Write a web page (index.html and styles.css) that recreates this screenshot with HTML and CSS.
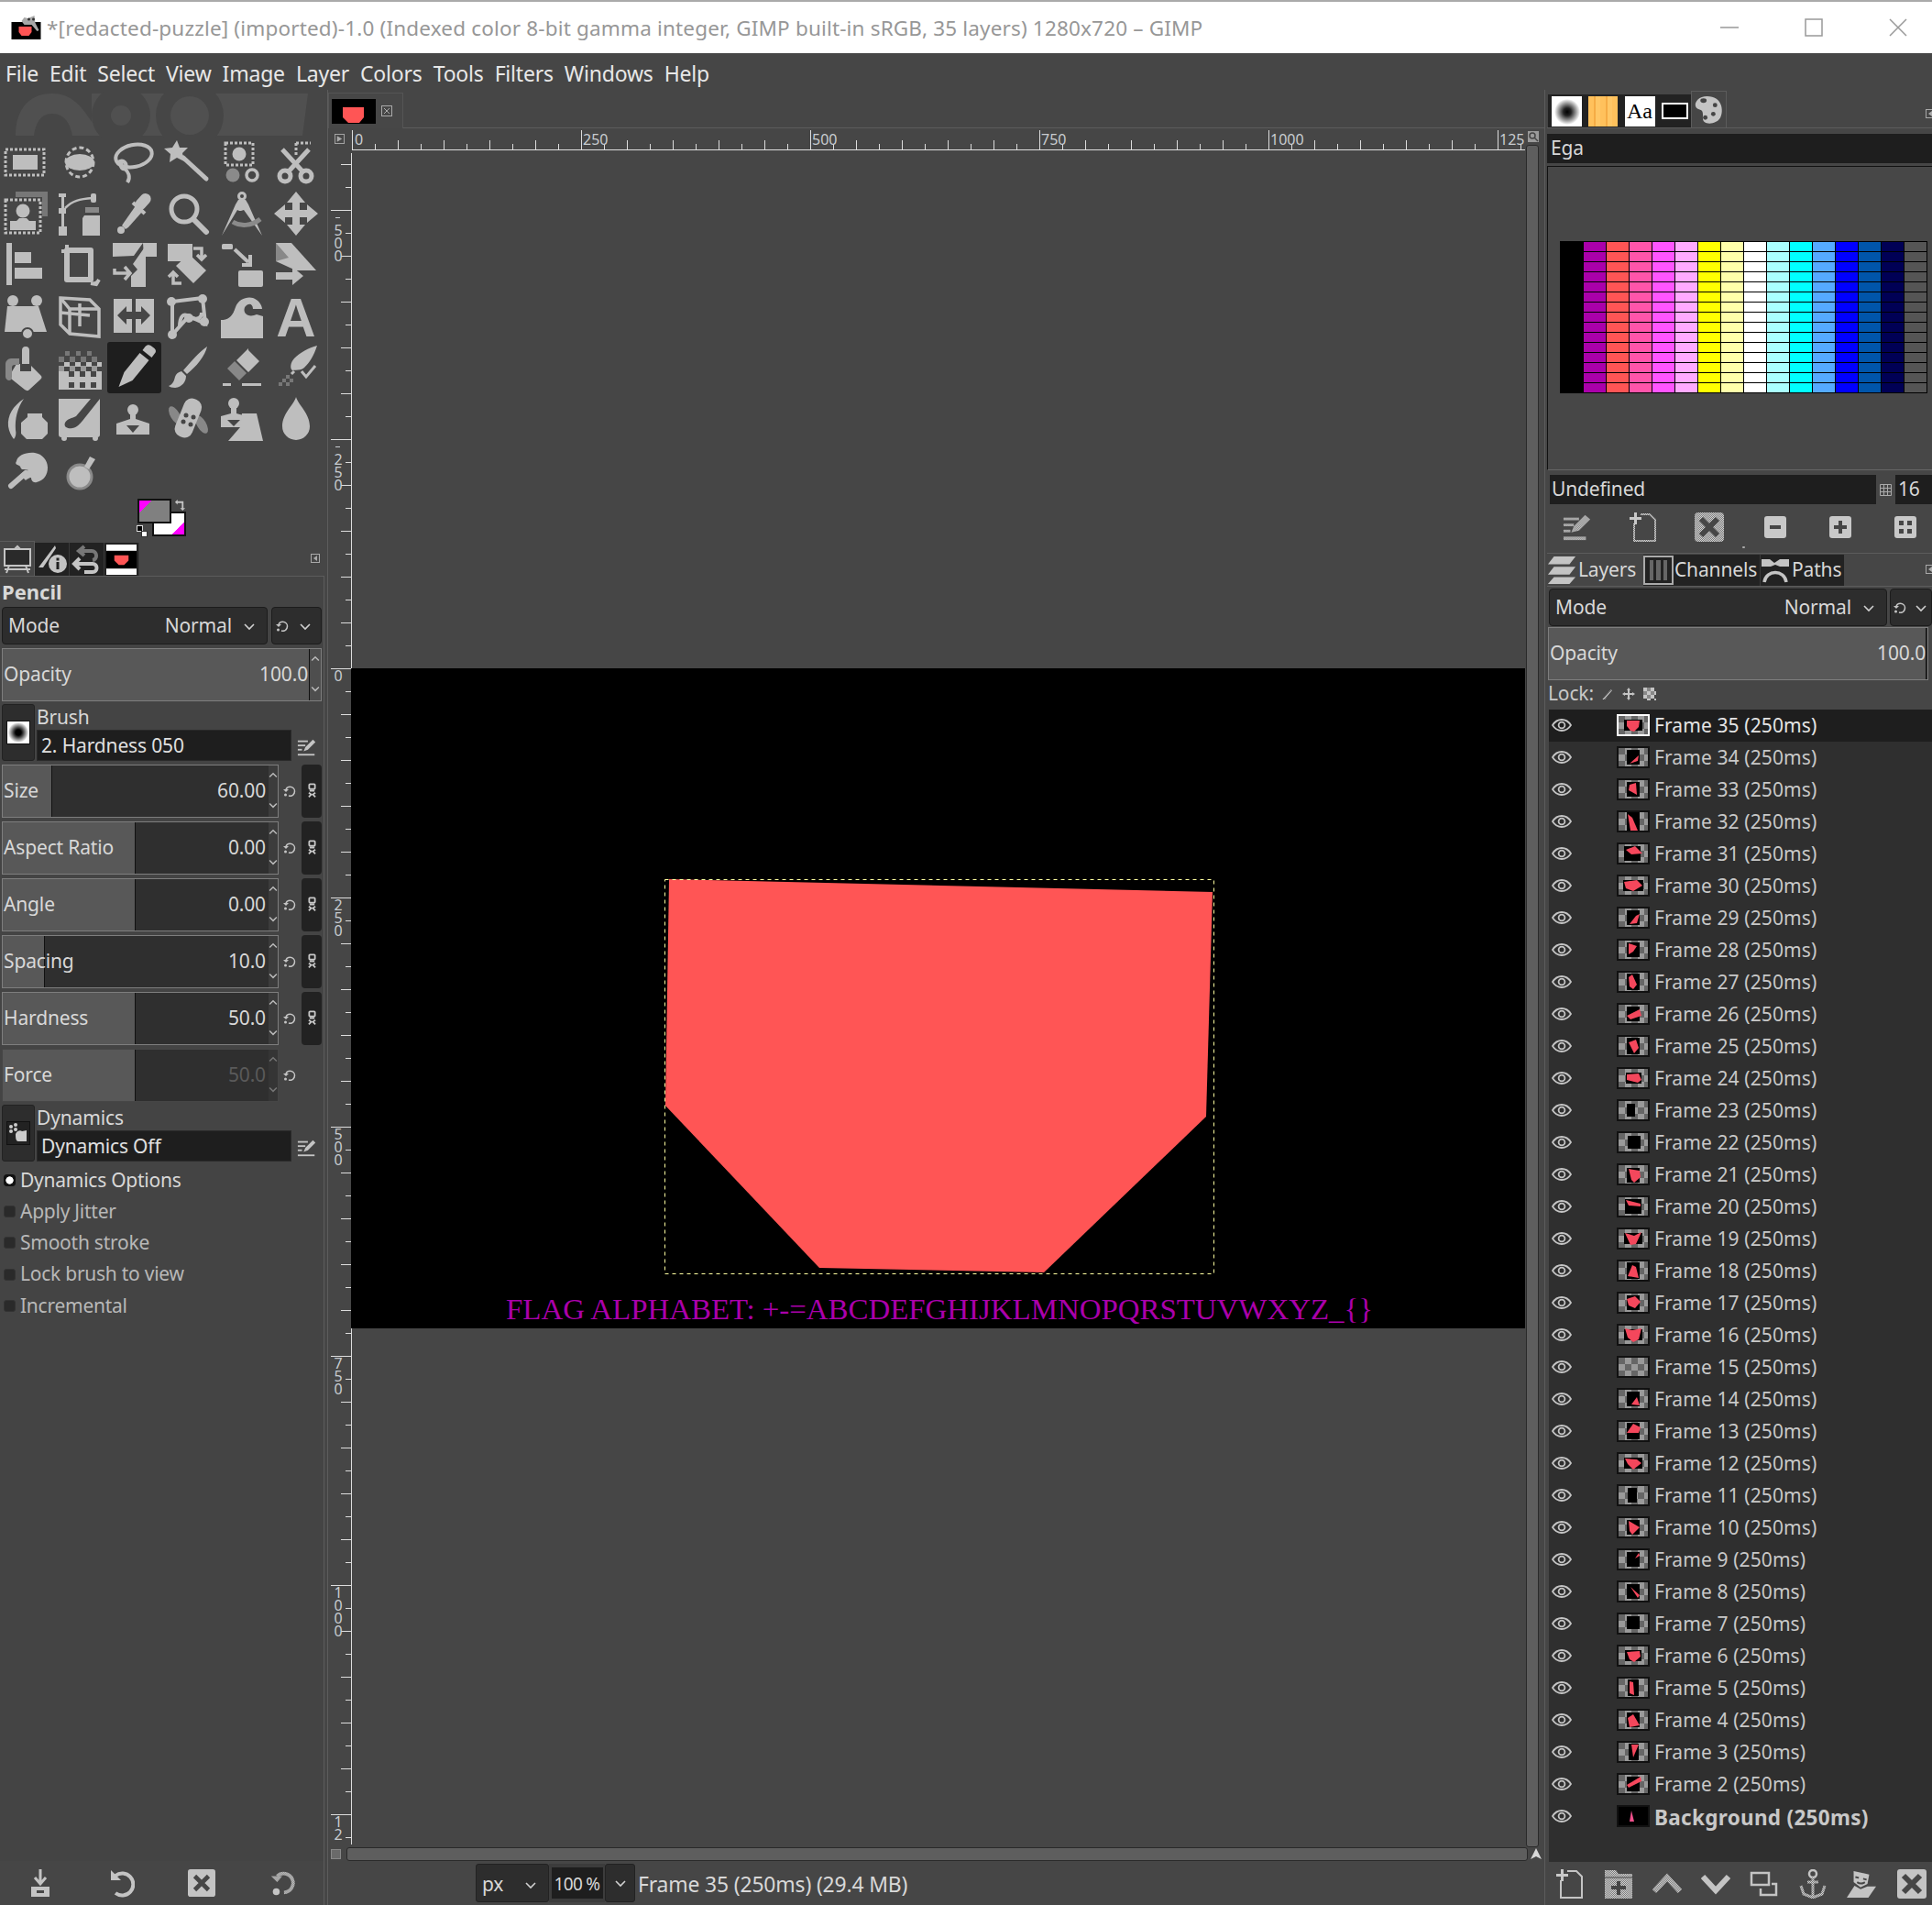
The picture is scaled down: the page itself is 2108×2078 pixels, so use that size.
FILE: index.html
```html
<!DOCTYPE html>
<html lang="en">
<head>
<meta charset="utf-8">
<title>GIMP</title>
<link rel="stylesheet" href="styles.css">
</head>
<body>
<svg class="sprite" width="0" height="0" aria-hidden="true">
  <defs>
    <pattern id="d" width="2" height="2" patternUnits="userSpaceOnUse"><rect width="2" height="2" fill="#7c7c7c"/><rect width="1" height="1" fill="#d0d0d0"/><rect x="1" y="1" width="1" height="1" fill="#d0d0d0"/></pattern>
    <pattern id="hr" x="0" y="0" width="50" height="24" patternUnits="userSpaceOnUse"><rect x="0" y="13" width="1" height="10" fill="#ddd"/><rect x="25" y="17" width="1" height="6" fill="#ddd"/></pattern>
    <pattern id="vr" x="0" y="14" width="26" height="50" patternUnits="userSpaceOnUse"><rect x="14" y="0" width="11" height="1" fill="#ddd"/><rect x="19" y="25" width="6" height="1" fill="#ddd"/></pattern>
    <symbol id="chev" viewBox="0 0 14 14"><path d="M2 5l5 5 5-5" fill="none" stroke="#d0d0d0" stroke-width="1.6"/></symbol>
    <symbol id="reset" viewBox="0 0 16 16"><path d="M4 6a5 5 0 1 1 3 7" fill="none" stroke="#c4c4c4" stroke-width="1.6"/><path d="M1 6h6L4 9z" fill="#c4c4c4"/><circle cx="3.5" cy="12" r="1.5" fill="#c4c4c4"/></symbol>
    <symbol id="chain" viewBox="0 0 12 20"><g fill="none" stroke="#c8c8c8" stroke-width="2"><rect x="2.500" y="1.500" width="7" height="6" rx="1"/><path d="M2 12l3 2-3 3M10 12l-3 2 3 3M3 9.500h6"/></g></symbol>
    <symbol id="edit" viewBox="0 0 24 24"><g fill="#c4c4c4"><rect x="1" y="4" width="12" height="2"/><rect x="1" y="9" width="9" height="2"/><rect x="1" y="14" width="5" height="2"/><rect x="1" y="20" width="20" height="2"/><path d="M8 17l2-5L19 3l3 3-9 9z"/></g></symbol>
    <symbol id="eye" viewBox="0 0 22 16"><path d="M1 8c5-8 15-8 20 0-5 8-15 8-20 0z" fill="none" stroke="#c4c4c4" stroke-width="1.800"/><circle cx="11" cy="8" r="3.400" fill="none" stroke="#c4c4c4" stroke-width="1.800"/></symbol>
    <symbol id="spin" viewBox="0 0 10 58"><path d="M1 13l4-4 4 4" fill="none" stroke="#bbb" stroke-width="1.500"/><path d="M1 43l4 4 4-4" fill="none" stroke="#bbb" stroke-width="1.500"/></symbol>
  </defs>
</svg>

<header class="titlebar">
  <svg class="appicon" viewBox="0 0 32 30"><rect x="0" y="9" width="32" height="19" fill="#000"/><path d="M8 14h14v6l-3 4h-8l-3-4z" fill="#f55"/><path d="M11 8l3-4 4 1 7-3 1 8 4 8-2 1-6-7H14z" fill="#a8a8a8"/><circle cx="19" cy="6" r="1.500" fill="#333"/><circle cx="24" cy="6" r="1.500" fill="#333"/></svg>
  <span class="wintitle">*[redacted-puzzle] (imported)-1.0 (Indexed color 8-bit gamma integer, GIMP built-in sRGB, 35 layers) 1280x720 – GIMP</span>
  <span class="winbtns">
    <svg class="wb" viewBox="0 0 22 22"><path d="M1 11h20" stroke="#999" stroke-width="1.500"/></svg>
    <svg class="wb" viewBox="0 0 22 22"><rect x="2" y="2" width="18" height="18" fill="none" stroke="#999" stroke-width="1.500"/></svg>
    <svg class="wb" viewBox="0 0 22 22"><path d="M2 2l18 18M20 2L2 20" stroke="#999" stroke-width="1.500"/></svg>
  </span>
</header>

<nav class="menubar">
  <span>File</span><span>Edit</span><span>Select</span><span>View</span><span>Image</span><span>Layer</span><span>Colors</span><span>Tools</span><span>Filters</span><span>Windows</span><span>Help</span>
</nav>

<main class="main">
  <section class="left">
    <svg class="wilber" viewBox="0 0 357 50"><path d="M17 48c0-28 14-46 40-46 24 0 36 18 52 46h-30c-2-12-8-24-22-24s-18 12-20 24z" fill="#505050"/><path d="M100 2h236l-6 46H100z" fill="#505050"/><circle cx="132" cy="26" r="32" fill="#464646"/><circle cx="132" cy="26" r="11" fill="#505050"/><circle cx="207" cy="26" r="37" fill="#464646"/><circle cx="207" cy="26" r="21" fill="#505050"/></svg>

    <div class="tools">
      <svg viewBox="0 0 48 48"><rect x="2" y="10" width="42" height="28" fill="none" stroke="#bebebe" stroke-width="3" stroke-dasharray="3 2"/><rect x="10" y="16" width="27" height="16"/></svg>
      <svg viewBox="0 0 48 48"><ellipse cx="24" cy="24" rx="16" ry="9"/><ellipse cx="24" cy="24" rx="15" ry="16" fill="none" stroke="#bebebe" stroke-width="3" stroke-dasharray="5 3"/></svg>
      <svg viewBox="0 0 48 48"><g fill="none" stroke="#bebebe" stroke-width="4"><ellipse cx="24" cy="17" rx="20" ry="12" transform="rotate(-12 24 17)"/><path d="M7 24c6-4 10 2 8 6s-8-2-4-6M13 30c5 4 8 10 4 16"/></g></svg>
      <svg viewBox="0 0 48 48"><path d="M12 0l3 8 9 0-6 6 2 9-8-4-8 5 1-9-7-6 9-1z"/><path d="M19 19l25 23" stroke="#bebebe" stroke-width="5" stroke-linecap="round"/></svg>
      <svg viewBox="0 0 48 48"><rect x="6" y="3" width="30" height="24" fill="none" stroke="#bebebe" stroke-width="3" stroke-dasharray="3 2"/><circle cx="21" cy="15" r="7.500"/><circle cx="14" cy="38" r="7.500" fill="#8a8a8a"/><circle cx="35" cy="38" r="6" fill="none" stroke="#bebebe" stroke-width="3.500"/></svg>
      <svg viewBox="0 0 48 48"><path d="M24 3h16M24 3v14" stroke="#bebebe" stroke-width="3" stroke-dasharray="3 2" fill="none"/><path d="M9 10l24 26M38 10L14 36" stroke="#bebebe" stroke-width="5"/><g fill="none" stroke="#bebebe" stroke-width="5"><circle cx="12" cy="39" r="6"/><circle cx="35" cy="39" r="6"/></g></svg>

      <svg viewBox="0 0 48 48"><path d="M13 0h35v27h-6V6H13z" fill="#777"/><rect x="2" y="9" width="38" height="36" fill="none" stroke="#bebebe" stroke-width="3" stroke-dasharray="3 2"/><circle cx="21" cy="21" r="7.500"/><path d="M7 42V32h7l3-3h8l3 3h7v10z"/></svg>
      <svg viewBox="0 0 48 48"><path d="M1 2h8v4H7v12h2v6H7v14h3v10H1V38h3V24H1v-6h3V6H1z"/><path d="M8 18C16 10 24 8 38 7" fill="none" stroke="#bebebe" stroke-width="2.500"/><rect x="36" y="2" width="6" height="10" rx="2"/><rect x="30" y="17" width="15" height="6" fill="#888"/><path d="M29 26h17v22H27V29z"/></svg>
      <svg viewBox="0 0 48 48"><path d="M27 14l7 7-16 18-3 2-4-4 2-3z"/><path d="M23 12l13 12" stroke="#bebebe" stroke-width="4"/><rect x="28" y="1" width="12" height="20" rx="6" transform="rotate(42 34 11)"/><circle cx="10" cy="42" r="4"/></svg>
      <svg viewBox="0 0 48 48"><circle cx="20" cy="19" r="14" fill="none" stroke="#bebebe" stroke-width="5"/><path d="M30 30l14 14" stroke="#bebebe" stroke-width="6" stroke-linecap="round"/></svg>
      <svg viewBox="0 0 48 48"><circle cx="24" cy="5" r="3.500" fill="none" stroke="#bebebe" stroke-width="3"/><path d="M20 9h8l3 5 15 34-20-28-3 1h-2l-2-1L2 48 17 14z"/><path d="M14 33c8 5 20 5 30-3" fill="none" stroke="#8a8a8a" stroke-width="5"/></svg>
      <svg viewBox="0 0 48 48"><path d="M24 0l10 12h-6v8h8v-6l12 10-12 10v-6h-8v8h6L24 48 14 36h6v-8h-8v6L0 24l12-10v6h8v-8h-6z"/></svg>

      <svg viewBox="0 0 48 48"><rect x="3" y="0" width="6" height="46"/><rect x="12" y="10" width="18" height="12"/><rect x="12" y="27" width="30" height="12"/></svg>
      <svg viewBox="0 0 48 48"><path d="M10 8h26v32H10z" fill="none" stroke="#bebebe" stroke-width="6" stroke-linejoin="round"/><path d="M4 9h12M10 2v8M36 44l6 1 3-5" stroke="#bebebe" stroke-width="4"/></svg>
      <svg viewBox="0 0 48 48"><path d="M1 0h33L24 14v0L1 15zM34 0h15v15H35z"/><path d="M37 3v45H21V36l7-7-5-6z"/><path d="M3 28v5h16M14 26l6 7-6 7" fill="none" stroke="#bebebe" stroke-width="3.500"/></svg>
      <svg viewBox="0 0 48 48"><rect x="2" y="1" width="27" height="19"/><path d="M25 12L44 30 30 44 11 25z"/><path d="M30 6h9v10M34 13l5 5 5-5M17 44H8V34M3 37l5-5 5 5" fill="none" stroke="#bebebe" stroke-width="3.500"/></svg>
      <svg viewBox="0 0 48 48"><rect x="2" y="1" width="12" height="6" rx="1.500"/><path d="M16 7l15 14M24 24h9V13" fill="none" stroke="#bebebe" stroke-width="4"/><rect x="20" y="30" width="27" height="18" rx="2"/></svg>
      <svg viewBox="0 0 48 48"><path d="M2 0h17l27 30H24L2 20z"/><path d="M2 20V0l14 16z" fill="#888"/><path d="M2 32h18v-6l12 10-12 10v-6H2z"/></svg>

      <svg viewBox="0 0 48 48"><path d="M4 13h34l9 28H1z"/><circle cx="10" cy="7" r="6"/><circle cx="36" cy="7" r="6"/><circle cx="26" cy="43" r="6" stroke="#464646" stroke-width="2"/></svg>
      <svg viewBox="0 0 48 48"><g fill="none" stroke="#bebebe" stroke-width="3.500"><path d="M3 4l32 2 10 10v30l-32-3L3 33z"/><path d="M3 4l10 12h32M13 16v27"/><path d="M24 10v25M3 20l32 3"/></g></svg>
      <svg viewBox="0 0 48 48"><rect x="2" y="5" width="20" height="37"/><rect x="26" y="5" width="20" height="37"/><path d="M6 23l10-10v6h16v-6l10 10-10 10v-6H16v6z" fill="#464646"/></svg>
      <svg viewBox="0 0 48 48"><g fill="none" stroke="#bebebe" stroke-width="4"><path d="M7 8l33-4 3 28-18-8-18 20z"/><path d="M15 36c0-12 4-16 10-12s14 4 14-4"/></g><circle cx="7" cy="44" r="5"/><circle cx="42" cy="30" r="5"/><circle cx="25" cy="26" r="5"/><circle cx="40" cy="5" r="5"/><circle cx="6" cy="8" r="5"/></svg>
      <svg viewBox="0 0 48 48"><path d="M1 48V28c8 0 13-4 16-14C20 5 30 2 36 4c6 2 10 8 10 12H36c0-5-4-7-8-3-2 2-2 6 0 8 2 3 8 3 12 1l7 2v24z"/></svg>
      <svg viewBox="0 0 48 48"><text class="aglyph" x="24" y="46" text-anchor="middle">A</text></svg>

      <svg viewBox="0 0 48 48"><path d="M24 1c3 0 4 2 4 4v15l-8 0V5c0-2 1-4 4-4z"/><path d="M14 20h4v8h12v-6l10 10c2 2 2 3 0 5L28 48c-2 2-3 1-5 0L8 36c-2-2-2-4 0-6z"/><path d="M17 14H8c-3 0-6 3-6 6v14c0 2 2 4 4 4s3-2 3-4V24c0-2 1-3 3-3h5z" fill="#888"/></svg>
      <svg viewBox="0 0 48 48"><path d="M1 48V28h47v20z"/><g fill="#464646"><rect x="12" y="28" width="6" height="6"/><rect x="24" y="28" width="6" height="6"/><rect x="36" y="28" width="6" height="6"/><rect x="12" y="40" width="6" height="6"/><rect x="24" y="40" width="6" height="6"/><rect x="36" y="40" width="6" height="6"/></g><g fill="#777"><rect x="1" y="12" width="6" height="6"/><rect x="13" y="12" width="6" height="6"/><rect x="25" y="12" width="6" height="6"/><rect x="37" y="12" width="6" height="6"/><rect x="8" y="6" width="5" height="5"/><rect x="20" y="6" width="5" height="5"/><rect x="32" y="6" width="5" height="5"/></g><g fill="#bebebe"><rect x="7" y="18" width="6" height="5"/><rect x="19" y="18" width="6" height="5"/><rect x="31" y="18" width="6" height="5"/><rect x="43" y="18" width="5" height="5"/></g><g fill="#999"><rect x="1" y="22" width="6" height="6"/><rect x="13" y="22" width="6" height="6"/><rect x="25" y="22" width="6" height="6"/><rect x="37" y="22" width="6" height="6"/></g></svg>
      <svg viewBox="0 0 48 48"><path d="M7 45l6-16 17-21 10 8-18 22z"/><path d="M33 5l3-4c2-2 4-2 6-1l4 3c2 2 2 4 0 6l-3 4z"/></svg>
      <svg viewBox="0 0 48 48"><path d="M45 1c-2 10-12 22-22 30l-4-4C28 17 36 7 45 1z"/><path d="M17 28l5 5c0 6-4 12-12 13-3 0-6-1-7-2 5-2 6-6 7-10 1-3 3-5 7-6z"/></svg>
      <svg viewBox="0 0 48 48"><path d="M28 7L40 19 28 31 15 18l13-13z" transform="translate(3 -2)"/><path d="M16 17l13 13-8 8-13-13z" fill="#888"/><rect x="3" y="41" width="9" height="3"/><rect x="24" y="41" width="21" height="3"/></svg>
      <svg viewBox="0 0 48 48"><path d="M47 0c-4 12-8 18-14 24-4 4-10 2-13 3-3-2-2-9 2-13C28 8 38 2 47 0z"/><path d="M22 28l-3 3" stroke="#bebebe" stroke-width="3"/><g fill="#777"><rect x="13" y="32" width="4" height="4"/><rect x="9" y="36" width="4" height="4"/><rect x="17" y="36" width="4" height="4"/><rect x="13" y="40" width="4" height="4"/><rect x="5" y="40" width="4" height="4"/></g><path d="M30 28l5 6 10-12" fill="none" stroke="#bebebe" stroke-width="3"/></svg>

      <svg viewBox="0 0 48 48"><path d="M22 2C10 10 4 20 5 32c1 6 3 10 6 14 2-2 3-6 2-10-1-12 2-24 9-34z"/><path d="M29 18h16v4l6 6v12l-6 6H28l-6-6V28l7-6z" transform="translate(-3 0)"/></svg>
      <svg viewBox="0 0 48 48"><path d="M1 2h45v39c0 2-1 3-3 3H4c-2 0-3-1-3-3z"/><path d="M46 2H36L20 21c-4 2-10 3-12 7-2 5 3 7 8 6 6-1 8-5 11-8z" fill="#464646"/><circle cx="7" cy="45" r="3"/><circle cx="41" cy="45" r="3"/></svg>
      <svg viewBox="0 0 48 48"><circle cx="23" cy="14" r="6"/><path d="M20 18h6v6l15 5v12H5V29l15-5z"/><path d="M16 31h14l-7 8z" fill="#464646"/></svg>
      <svg viewBox="0 0 48 48"><g fill="#888"><ellipse cx="10" cy="20" rx="5" ry="11" transform="rotate(-30 10 20)"/><ellipse cx="39" cy="30" rx="5" ry="11" transform="rotate(-30 39 30)"/></g><rect x="14" y="1" width="20" height="44" rx="9" transform="rotate(22 24 24)"/><g fill="#464646"><circle cx="22" cy="20" r="2.500"/><circle cx="30" cy="22" r="2.500"/><circle cx="19" cy="27" r="2.500"/><circle cx="27" cy="30" r="2.500"/></g></svg>
      <svg viewBox="0 0 48 48"><circle cx="15" cy="7" r="6"/><path d="M12 12h6v6l11 3v12H1V21l11-3z"/><path d="M8 25h14l-7 7z" fill="#464646"/><path d="M30 18h16l7 30H15l13-15z" transform="translate(-6 0)"/></svg>
      <svg viewBox="0 0 48 48"><path d="M24 0c2 8 15 18 15 32a15 15 0 0 1-30 0C9 18 22 8 24 0z"/></svg>

      <svg viewBox="0 0 48 48"><path d="M14 14c1-6 10-10 20-9 8 1 14 8 14 16 0 8-4 14-12 16-4 1-6-2-6-5-2 0-5 2-6 3l-6-6c2-2 6-5 9-5-2-1-4-1-7-1-2-1-1-3-3-4-3-1-5-2-3-5z"/><path d="M24 27L8 41" stroke="#bebebe" stroke-width="6" stroke-linecap="round"/></svg>
      <svg viewBox="0 0 48 48"><circle cx="24" cy="31" r="13" fill="#bebebe" stroke="#8a8a8a" stroke-width="3"/><path d="M29 20l6-11 6 3-7 11z"/></svg>
    </div>

    <div class="colors">
      <div class="swatches">
        <div class="bg"></div>
        <div class="fg"></div>
        <svg class="swap" viewBox="0 0 14 14"><path d="M1 4l3-3v2h7v8h2l-3 3-3-3h2V5H4v2z" fill="#c4c4c4"/></svg>
        <i class="defblack"></i><i class="defwhite"></i>
      </div>
    </div>

    <div class="docktabs">
      <div class="dtab on"><svg class="dticon" viewBox="0 0 34 34"><path d="M3 6h28v18H3z" fill="#2a2a2a" stroke="#c4c4c4" stroke-width="2"/><path d="M14 6l3-3 3 3M8 24l-3 8M26 24l3 8M3 28h28" fill="none" stroke="#c4c4c4" stroke-width="2"/></svg></div>
      <div class="dtab"><svg class="dticon" viewBox="0 0 34 34"><path d="M2 26L20 2l1 3L7 26z" fill="#c4c4c4"/><circle cx="23" cy="22" r="10" fill="#c4c4c4"/><rect x="21.500" y="20" width="3" height="8" fill="#222"/><rect x="21.500" y="15.500" width="3" height="3" fill="#222"/></svg></div>
      <div class="dtab"><svg class="dticon" viewBox="0 0 34 34"><path d="M8 8h14c6 0 7 9 1 10M14 3L8 8l6 5" fill="none" stroke="#777" stroke-width="4"/><path d="M3 22h20c6 0 6 9 0 9H14M9 16l-6 6 6 6" fill="none" stroke="#c4c4c4" stroke-width="4"/></svg></div>
      <div class="dtab"><svg class="dimg" viewBox="0 0 34 34"><rect width="34" height="34" fill="#fff"/><rect y="7" width="34" height="20" fill="#000"/><path d="M9 12h16v6l-5 5h-6l-5-5z" fill="#f55"/></svg></div>
      <svg class="cfg" viewBox="0 0 10 10"><rect x=".5" y=".5" width="9" height="9" fill="none" stroke="#aaa"/><path d="M7 2v6L3 5z" fill="#aaa"/></svg>
    </div>

    <div class="options">
      <div class="opttitle">Pencil</div>
      <div class="modeRow">
        <div class="combo grow"><span>Mode</span><span class="push">Normal</span><svg class="chev"><use href="#chev"/></svg></div>
        <div class="combo small"><svg class="rs"><use href="#reset"/></svg><svg class="chev"><use href="#chev"/></svg></div>
      </div>
      <div class="spin wide"><i class="fill full" style="width:336px"></i><span>Opacity</span><b>100.0</b><i class="arrows dark"><svg><use href="#spin"/></svg></i></div>

      <div class="picker brushp">
        <div class="pbtn"><span class="preview"><span class="blob"></span></span></div>
        <div class="pcol"><div class="plabel">Brush</div><div class="pentry">2. Hardness 050</div></div>
        <svg class="pedit"><use href="#edit"/></svg>
      </div>

      <div class="srow"><div class="spin"><i class="fill" style="width:54px"></i><span>Size</span><b>60.00</b><i class="arrows"><svg><use href="#spin"/></svg></i></div><svg class="rs"><use href="#reset"/></svg><span class="lockb"><svg><use href="#chain"/></svg></span></div>
      <div class="srow"><div class="spin"><i class="fill" style="width:145px"></i><span>Aspect Ratio</span><b>0.00</b><i class="arrows"><svg><use href="#spin"/></svg></i></div><svg class="rs"><use href="#reset"/></svg><span class="lockb"><svg><use href="#chain"/></svg></span></div>
      <div class="srow"><div class="spin"><i class="fill" style="width:145px"></i><span>Angle</span><b>0.00</b><i class="arrows"><svg><use href="#spin"/></svg></i></div><svg class="rs"><use href="#reset"/></svg><span class="lockb"><svg><use href="#chain"/></svg></span></div>
      <div class="srow"><div class="spin"><i class="fill" style="width:46px"></i><span>Spacing</span><b>10.0</b><i class="arrows"><svg><use href="#spin"/></svg></i></div><svg class="rs"><use href="#reset"/></svg><span class="lockb"><svg><use href="#chain"/></svg></span></div>
      <div class="srow"><div class="spin"><i class="fill" style="width:145px"></i><span>Hardness</span><b>50.0</b><i class="arrows"><svg><use href="#spin"/></svg></i></div><svg class="rs"><use href="#reset"/></svg><span class="lockb"><svg><use href="#chain"/></svg></span></div>
      <div class="srow"><div class="spin off"><i class="fill" style="width:145px"></i><span>Force</span><b>50.0</b><i class="arrows"><svg><use href="#spin"/></svg></i></div><svg class="rs"><use href="#reset"/></svg></div>

      <div class="picker dynp">
        <div class="pbtn"><span class="preview dyn"><svg viewBox="0 0 24 24"><g fill="#ccc"><circle cx="4" cy="5" r="2"/><circle cx="9" cy="3" r="2"/><circle cx="4" cy="10" r="2"/><circle cx="9" cy="8" r="2"/><path d="M9 13c1-3 5-5 7-3l5-1v12H12c-3 0-3-5-3-8z"/></g></svg></span></div>
        <div class="pcol"><div class="plabel">Dynamics</div><div class="pentry">Dynamics Off</div></div>
        <svg class="pedit"><use href="#edit"/></svg>
      </div>

      <div class="check first"><i class="box on"></i>Dynamics Options</div>
      <div class="check dim"><i class="box"></i>Apply Jitter</div>
      <div class="check dim"><i class="box"></i>Smooth stroke</div>
      <div class="check dim"><i class="box"></i>Lock brush to view</div>
      <div class="check dim"><i class="box"></i>Incremental</div>
    </div>

    <div class="actions">
      <svg viewBox="0 0 28 32"><path d="M14 1v14M8 10l6 7 6-7" fill="none" stroke="#c4c4c4" stroke-width="3"/><path d="M4 20h20v11H4z" fill="#c4c4c4"/><rect x="10" y="24" width="8" height="3" fill="#464646"/></svg>
      <svg viewBox="0 0 28 32"><path d="M8 8a12 12 0 1 1 0 19" fill="none" stroke="#c4c4c4" stroke-width="4"/><path d="M3 2v11h11z" fill="#c4c4c4"/></svg>
      <svg viewBox="0 0 32 32"><rect width="32" height="32" rx="3" fill="#c4c4c4"/><path d="M8 8l16 16M24 8L8 24" stroke="#464646" stroke-width="5"/></svg>
      <svg viewBox="0 0 32 32"><path d="M10 8a11 11 0 1 1 8 19" fill="none" stroke="url(#d)" stroke-width="4"/><path d="M3 8h13l-6 7z" fill="url(#d)"/><circle cx="9" cy="26" r="4" fill="#c4c4c4"/></svg>
    </div>
  </section>

  <section class="center">
    <div class="imgtabs">
      <div class="imgtab">
        <svg class="imgthumb" viewBox="0 0 48 27"><rect width="48" height="27" fill="#000"/><path d="M12 9h23v11l-5 6H18l-6-6z" fill="#f55"/></svg>
        <svg class="imgclose" viewBox="0 0 12 12"><rect x=".5" y=".5" width="11" height="11" fill="none" stroke="#aaa"/><path d="M3 3l6 6M9 3l-6 6" stroke="#aaa"/></svg>
      </div>
    </div>
    <div class="viewport">
      <div class="navbtn"><svg viewBox="0 0 12 12"><rect x=".5" y=".5" width="11" height="11" fill="none" stroke="#aaa"/><path d="M3 2.500v7l6-3.500z" fill="#aaa"/></svg></div>
      <svg class="hruler" viewBox="0 0 1280 25">
        <rect x="0" width="1280" height="25" fill="url(#hr)"/>
        <rect y="23" width="1280" height="1" fill="#ddd"/>
        <path d="M.5 2v21M250.500 2v21M500.500 2v21M750.500 2v21M1000.500 2v21M1250.500 2v21" stroke="#ddd"/>
        <g class="rtext"><text x="3" y="18">0</text><text x="252" y="18">250</text><text x="502" y="18">500</text><text x="752" y="18">750</text><text x="1002" y="18">1000</text><text x="1252" y="18">125</text></g>
      </svg>
      <div class="vscrolltop"><svg viewBox="0 0 12 12"><rect width="12" height="12" fill="#9a9a9a"/><circle cx="5" cy="5" r="3" fill="none" stroke="#444" stroke-width="1.500"/><path d="M7 7l4 4" stroke="#444" stroke-width="1.500"/></svg></div>

      <svg class="vruler" viewBox="0 0 26 1850">
        <rect width="26" height="1847" fill="url(#vr)"/>
        <rect x="25" y="2" width="1" height="1845" fill="#ddd"/>
        <path d="M3 64.500h22M3 314.500h22M3 564.500h22M3 814.500h22M3 1064.500h22M3 1314.500h22M3 1564.500h22M3 1814.500h22" stroke="#ddd"/>
        <g class="rtext mid">
          <rect x="8" y="72" width="5" height="1"/><text x="11" y="92">5</text><text x="11" y="106">0</text><text x="11" y="120">0</text>
          <rect x="8" y="322" width="5" height="1"/><text x="11" y="342">2</text><text x="11" y="356">5</text><text x="11" y="370">0</text>
          <text x="11" y="578">0</text>
          <text x="11" y="828">2</text><text x="11" y="842">5</text><text x="11" y="856">0</text>
          <text x="11" y="1078">5</text><text x="11" y="1092">0</text><text x="11" y="1106">0</text>
          <text x="11" y="1328">7</text><text x="11" y="1342">5</text><text x="11" y="1356">0</text>
          <text x="11" y="1578">1</text><text x="11" y="1592">0</text><text x="11" y="1606">0</text><text x="11" y="1620">0</text>
          <text x="11" y="1828">1</text><text x="11" y="1842">2</text>
        </g>
      </svg>

      <div class="canvas">
        <svg class="image" viewBox="0 0 1281 720">
          <rect width="1281" height="720" fill="#000"/>
          <path d="M347 230l593 14-7 245-177 170-245-5-168-177z" fill="#ff5555"/>
          <rect x="342.500" y="230.500" width="599" height="430" fill="none" stroke="#ffffa0" stroke-dasharray="4 4"/>
          <text class="flag" x="169" y="710" textLength="946" lengthAdjust="spacingAndGlyphs">FLAG ALPHABET: +-=ABCDEFGHIJKLMNOPQRSTUVWXYZ_{}</text>
        </svg>
      </div>
      <div class="vscroll"></div>

      <div class="hbar"><i class="navsq"></i><i class="hthumb"></i></div>
      <div class="corner"><svg viewBox="0 0 14 14"><path d="M7 1l6 12-6-3-6 3z" fill="#d8d8d8"/></svg></div>
    </div>
    <div class="status">
      <div class="scombo px"><span>px</span><svg class="chev"><use href="#chev"/></svg></div>
      <div class="zoomwrap"><span class="zoomval">100 %</span></div>
      <div class="scombo zm"><svg class="chev"><use href="#chev"/></svg></div>
      <span class="stext">Frame 35 (250ms) (29.4 MB)</span>
    </div>
  </section>

  <section class="right">
    <div class="rtabs">
      <div class="rt"><svg class="rti" viewBox="0 0 33 33"><defs><radialGradient id="bg1"><stop offset="0" stop-color="#000"/><stop offset=".3" stop-color="#222"/><stop offset="1" stop-color="#fff"/></radialGradient></defs><rect width="33" height="33" fill="#fff"/><circle cx="17" cy="17" r="14" fill="url(#bg1)"/></svg></div>
      <div class="rt"><span class="wood"></span></div>
      <div class="rt"><span class="aa">Aa</span></div>
      <div class="rt rtw"><span class="blackrect"></span></div>
      <div class="rt act"><svg class="rti" viewBox="0 0 32 34"><path d="M14 2C5 2 0 8 1 13c1 5 7 3 8 7 1 4-1 8 2 11 4 3 14 2 18-5 4-8 2-24-15-24z" fill="#c4c4c4"/><g fill="#454545"><ellipse cx="10" cy="7" rx="3.500" ry="2.500"/><circle cx="23" cy="12" r="2.500"/><circle cx="21" cy="22" r="2.500"/><circle cx="12" cy="26" r="2.500"/></g></svg></div>
      <svg class="cfg" viewBox="0 0 10 10"><rect x=".5" y=".5" width="9" height="9" fill="none" stroke="#aaa"/><path d="M7 2v6L3 5z" fill="#aaa"/></svg>
    </div>
    <div class="egaEntry">Ega</div>
    <div class="palview">
      <div class="palette">
        <i class="k0"></i><i class="k1"></i><i class="k2"></i><i class="k3"></i><i class="k4"></i><i class="k5"></i><i class="k6"></i><i class="k7"></i><i class="k8"></i><i class="k9"></i><i class="k10"></i><i class="k11"></i><i class="k12"></i><i class="k13"></i><i class="k14"></i><i class="k15"></i>
      </div>
    </div>
    <div class="palname">
      <span class="ent undefined">Undefined</span>
      <svg class="gridic" viewBox="0 0 13 13"><path d="M.5.500h12v12H.5zM.5 4.500h12M.5 8.500h12M4.500.500v12M8.500.500v12" fill="none" stroke="#aaa"/></svg>
      <span class="ent cols">16</span>
    </div>
    <div class="palbtns">
      <svg viewBox="0 0 34 32"><g fill="url(#d)"><rect x="1" y="5" width="18" height="3"/><rect x="1" y="12" width="12" height="3"/><rect x="1" y="19" width="8" height="3"/><rect x="1" y="27" width="26" height="4"/><path d="M10 22l3-7L26 2l6 5-13 13z"/></g></svg>
      <svg viewBox="0 0 30 32"><path d="M5 12v19h23V8l-6-6H12" fill="none" stroke="url(#d)" stroke-width="2"/><path d="M8 0v5h5v3H8v5H5V8H0V5h5V0z" fill="#c8c8c8"/></svg>
      <svg viewBox="0 0 32 32"><rect width="32" height="32" rx="4" fill="url(#d)"/><path d="M7 7l18 18M25 7L7 25" stroke="#464646" stroke-width="6"/></svg>
      <svg viewBox="0 0 32 32"><rect x="4" y="4" width="24" height="24" rx="3" fill="#c8c8c8"/><rect x="10" y="14" width="12" height="4" fill="#464646"/></svg>
      <svg viewBox="0 0 32 32"><rect x="4" y="4" width="24" height="24" rx="3" fill="#c8c8c8"/><path d="M14 9h4v5h5v4h-5v5h-4v-5H9v-4h5z" fill="#464646"/></svg>
      <svg viewBox="0 0 32 32"><rect x="4" y="4" width="24" height="24" rx="3" fill="#c8c8c8"/><path d="M9 9h5v5H9zM18 9h5v5h-5zM9 18h5v5H9zM18 18h5v5h-5z" fill="#464646"/></svg>
    </div>
    <div class="grip"></div>
    <div class="ltabs">
      <div class="lt on"><svg viewBox="0 0 32 34"><path d="M7 1h25l-7 9H0zM7 13h25l-7 9H0zM7 25h25l-7 8H0z" fill="#c4c4c4"/></svg><span>Layers</span></div>
      <div class="lt chan"><span class="chbox"><i></i><i></i><i></i></span><span>Channels</span></div>
      <div class="lt pth"><svg viewBox="0 0 32 30"><path d="M1 3h9l5 4 6-4h10v8H21l-5-2-5 2H1z" fill="#c4c4c4"/><path d="M4 28c2-14 22-14 24 0" fill="none" stroke="#c4c4c4" stroke-width="3.500"/></svg><span>Paths</span></div>
      <svg class="cfg" viewBox="0 0 10 10"><rect x=".5" y=".5" width="9" height="9" fill="none" stroke="#aaa"/><path d="M7 2v6L3 5z" fill="#aaa"/></svg>
    </div>
    <div class="modeRow rmode">
      <div class="combo grow"><span>Mode</span><span class="push">Normal</span><svg class="chev"><use href="#chev"/></svg></div>
      <div class="combo small"><svg class="rs"><use href="#reset"/></svg><svg class="chev"><use href="#chev"/></svg></div>
    </div>
    <div class="spin lop"><i class="fill full" style="width:412px"></i><span>Opacity</span><b>100.0</b></div>
    <div class="lockrow"><span>Lock:</span>
      <svg viewBox="0 0 14 14"><path d="M1 13L11 2l1 1L4 13z" fill="url(#d)"/></svg>
      <svg viewBox="0 0 14 14"><path d="M7 0l2 3H8v3h3V5l3 2-3 2V8H8v3h1l-2 3-2-3h1V8H3v1L0 7l3-2v1h3V3H5z" fill="#c4c4c4"/></svg>
      <svg viewBox="0 0 14 14"><path d="M0 0h4v4H0zM8 0h4v4H8zM4 4h4v4H4zM12 4h2v4h-2zM0 8h4v4H0zM8 8h4v4H8zM4 12h4v2H4zM12 12h2v2h-2z" fill="#c4c4c4"/><path d="M4 0h4v4H4zM0 4h4v4H0zM8 4h4v4H8zM4 8h4v4H4z" fill="#888"/></svg>
    </div>
    <ul class="layers">
      <li class="sel"><svg class="eye"><use href="#eye"/></svg><span class="thumb"><svg viewBox="0 0 32 20"><path class="k" d="M6 4h20v12H6z"/><path class="r" d="M9 5h14l-1 7-5 5-4-1-4-5z"/></svg></span>Frame 35 (250ms)</li>
      <li><svg class="eye"><use href="#eye"/></svg><span class="thumb"><svg viewBox="0 0 32 20"><path class="k" d="M9 2h14v16H9z"/><path class="r" d="M22 8l-1 6-9 3z"/></svg></span>Frame 34 (250ms)</li>
      <li><svg class="eye"><use href="#eye"/></svg><span class="thumb"><svg viewBox="0 0 32 20"><path class="k" d="M9 2h14v16H9z"/><path class="r" d="M12 5l7-2 1 13-9-5z"/></svg></span>Frame 33 (250ms)</li>
      <li><svg class="eye"><use href="#eye"/></svg><span class="thumb"><svg viewBox="0 0 32 20"><path class="k" d="M9 0h14v20H9z"/><path class="r" d="M10 2l5 4 6 14h-8z"/></svg></span>Frame 32 (250ms)</li>
      <li><svg class="eye"><use href="#eye"/></svg><span class="thumb"><svg viewBox="0 0 32 20"><path class="k" d="M6 2h18v16H6z"/><path class="r" d="M8 6l10-4 8 8-12 1z"/></svg></span>Frame 31 (250ms)</li>
      <li><svg class="eye"><use href="#eye"/></svg><span class="thumb"><svg viewBox="0 0 32 20"><path class="k" d="M5 4h22v12H5z"/><path class="r" d="M6 6l14-2 6 6-10 6-8-3z"/></svg></span>Frame 30 (250ms)</li>
      <li><svg class="eye"><use href="#eye"/></svg><span class="thumb"><svg viewBox="0 0 32 20"><path class="k" d="M9 2h14v16H9z"/><path class="r" d="M23 6l-3 10-8 1 7-9z"/></svg></span>Frame 29 (250ms)</li>
      <li><svg class="eye"><use href="#eye"/></svg><span class="thumb"><svg viewBox="0 0 32 20"><path class="k" d="M9 2h14v16H9z"/><path class="r" d="M11 3l9 3-4 6-5 3z"/></svg></span>Frame 28 (250ms)</li>
      <li><svg class="eye"><use href="#eye"/></svg><span class="thumb"><svg viewBox="0 0 32 20"><path class="k" d="M9 1h14v18H9z"/><path class="r" d="M11 5l4-3 5 11-4 5-4-3z"/></svg></span>Frame 27 (250ms)</li>
      <li><svg class="eye"><use href="#eye"/></svg><span class="thumb"><svg viewBox="0 0 32 20"><path class="k" d="M9 2h14v16H9z"/><path class="r" d="M9 12l14-7 2 7-12 4z"/></svg></span>Frame 26 (250ms)</li>
      <li><svg class="eye"><use href="#eye"/></svg><span class="thumb"><svg viewBox="0 0 32 20"><path class="k" d="M9 1h14v18H9z"/><path class="r" d="M11 6l8-3 3 9-5 6z"/></svg></span>Frame 25 (250ms)</li>
      <li><svg class="eye"><use href="#eye"/></svg><span class="thumb"><svg viewBox="0 0 32 20"><path class="k" d="M8 4h17v12H8z"/><path class="r" d="M9 6l13-1 3 7-4 3-12-3z"/></svg></span>Frame 24 (250ms)</li>
      <li><svg class="eye"><use href="#eye"/></svg><span class="thumb"><svg viewBox="0 0 32 20"><path class="k" d="M9 3h9v14H9z"/></svg></span>Frame 23 (250ms)</li>
      <li><svg class="eye"><use href="#eye"/></svg><span class="thumb"><svg viewBox="0 0 32 20"><path class="k" d="M10 3h14v14H10z"/></svg></span>Frame 22 (250ms)</li>
      <li><svg class="eye"><use href="#eye"/></svg><span class="thumb"><svg viewBox="0 0 32 20"><path class="k" d="M9 3h14v16H9z"/><path class="r" d="M11 4l12 2 1 7-7 6-3-3z"/></svg></span>Frame 21 (250ms)</li>
      <li><svg class="eye"><use href="#eye"/></svg><span class="thumb"><svg viewBox="0 0 32 20"><path class="k" d="M7 2h18v16H7z"/><path class="r" d="M8 3l16 4v3l-13-1z"/></svg></span>Frame 20 (250ms)</li>
      <li><svg class="eye"><use href="#eye"/></svg><span class="thumb"><svg viewBox="0 0 32 20"><path class="k" d="M6 4h20v12H6z"/><path class="r" d="M7 4l10 3 8-4-6 13-6 1z"/></svg></span>Frame 19 (250ms)</li>
      <li><svg class="eye"><use href="#eye"/></svg><span class="thumb"><svg viewBox="0 0 32 20"><path class="k" d="M9 1h14v18H9z"/><path class="r" d="M10 16l5-12 4 2 3 12z"/></svg></span>Frame 18 (250ms)</li>
      <li><svg class="eye"><use href="#eye"/></svg><span class="thumb"><svg viewBox="0 0 32 20"><path class="k" d="M9 2h14v16H9z"/><path class="r" d="M9 6l9-3 6 6-6 7-7-3z"/></svg></span>Frame 17 (250ms)</li>
      <li><svg class="eye"><use href="#eye"/></svg><span class="thumb"><svg viewBox="0 0 32 20"><path class="k" d="M6 4h20v12H6z"/><path class="r" d="M7 3l8 2 10-2-3 12-6 3-6-5z"/></svg></span>Frame 16 (250ms)</li>
      <li><svg class="eye"><use href="#eye"/></svg><span class="thumb"><svg viewBox="0 0 32 20"></svg></span>Frame 15 (250ms)</li>
      <li><svg class="eye"><use href="#eye"/></svg><span class="thumb"><svg viewBox="0 0 32 20"><path class="k" d="M9 2h14v16H9z"/><path class="r" d="M20 8l3 9-9-1z"/></svg></span>Frame 14 (250ms)</li>
      <li><svg class="eye"><use href="#eye"/></svg><span class="thumb"><svg viewBox="0 0 32 20"><path class="k" d="M9 1h14v18H9z"/><path class="r" d="M9 12l7-10 8 4-2 6z"/></svg></span>Frame 13 (250ms)</li>
      <li><svg class="eye"><use href="#eye"/></svg><span class="thumb"><svg viewBox="0 0 32 20"><path class="k" d="M6 4h20v12H6z"/><path class="r" d="M7 5l13 1 5 4-9 7-6-6z"/></svg></span>Frame 12 (250ms)</li>
      <li><svg class="eye"><use href="#eye"/></svg><span class="thumb"><svg viewBox="0 0 32 20"><path class="k" d="M10 2h10v16H10z"/></svg></span>Frame 11 (250ms)</li>
      <li><svg class="eye"><use href="#eye"/></svg><span class="thumb"><svg viewBox="0 0 32 20"><path class="k" d="M9 2h14v16H9z"/><path class="r" d="M11 3l12 7-8 8-3-4z"/></svg></span>Frame 10 (250ms)</li>
      <li><svg class="eye"><use href="#eye"/></svg><span class="thumb"><svg viewBox="0 0 32 20"><path class="k" d="M9 2h14v16H9z"/><path class="r" d="M22 3l1 3-5 3z"/></svg></span>Frame 9 (250ms)</li>
      <li><svg class="eye"><use href="#eye"/></svg><span class="thumb"><svg viewBox="0 0 32 20"><path class="k" d="M9 2h14v16H9z"/><path class="r" d="M13 5l10 9-2 3z"/></svg></span>Frame 8 (250ms)</li>
      <li><svg class="eye"><use href="#eye"/></svg><span class="thumb"><svg viewBox="0 0 32 20"><path class="k" d="M9 2h14v14H9z"/></svg></span>Frame 7 (250ms)</li>
      <li><svg class="eye"><use href="#eye"/></svg><span class="thumb"><svg viewBox="0 0 32 20"><path class="k" d="M7 4h18v12H7z"/><path class="r" d="M9 6l14-1 1 6-7 6-5-3z"/></svg></span>Frame 6 (250ms)</li>
      <li><svg class="eye"><use href="#eye"/></svg><span class="thumb"><svg viewBox="0 0 32 20"><path class="k" d="M10 1h12v18H10z"/><path class="r" d="M12 3l4 1 1 14-5-2z"/></svg></span>Frame 5 (250ms)</li>
      <li><svg class="eye"><use href="#eye"/></svg><span class="thumb"><svg viewBox="0 0 32 20"><path class="k" d="M9 2h14v16H9z"/><path class="r" d="M10 8l6-4 7 12-11 2z"/></svg></span>Frame 4 (250ms)</li>
      <li><svg class="eye"><use href="#eye"/></svg><span class="thumb"><svg viewBox="0 0 32 20"><path class="k" d="M11 1h11v18H11z"/><path class="r" d="M14 2h8l-6 14z"/></svg></span>Frame 3 (250ms)</li>
      <li><svg class="eye"><use href="#eye"/></svg><span class="thumb"><svg viewBox="0 0 32 20"><path class="k" d="M9 2h14v16H9z"/><path class="r" d="M9 11l15-9 1 5-14 7z"/></svg></span>Frame 2 (250ms)</li>
      <li class="base"><svg class="eye"><use href="#eye"/></svg><span class="thumb"><svg viewBox="0 0 32 20"><path class="k" d="M0 0h32v20H0z"/><path class="p" d="M14 4l3 12-5 0z"/></svg></span>Background (250ms)</li>
    </ul>
    <div class="layerbtns">
      <svg viewBox="0 0 30 32"><path d="M5 12v19h23V8l-6-6H12" fill="none" stroke="#c4c4c4" stroke-width="2"/><path d="M8 0v5h5v3H8v5H5V8H0V5h5V0z" fill="#c8c8c8"/></svg>
      <svg viewBox="0 0 32 32"><path d="M1 1h12l3 4h15v27H1z" fill="url(#d)"/><path d="M1 9h30" stroke="#464646"/><path d="M14 13h4v5h6v4h-6v6h-4v-6H8v-4h6z" fill="#464646"/></svg>
      <svg viewBox="0 0 32 24"><path d="M2 20L16 5l14 15" fill="none" stroke="url(#d)" stroke-width="6"/></svg>
      <svg viewBox="0 0 32 24"><path d="M2 4l14 15L30 4" fill="none" stroke="#c4c4c4" stroke-width="6"/></svg>
      <svg viewBox="0 0 32 28"><path d="M2 2h19v13H2zM24 14h5v12H12v-7" fill="none" stroke="#c4c4c4" stroke-width="2.500"/></svg>
      <svg viewBox="0 0 30 32"><circle cx="15" cy="5" r="4" fill="none" stroke="#c4c4c4" stroke-width="2.500"/><path d="M15 9v21M9 14h12M2 18l3 9 10 4 10-4 3-9" fill="none" stroke="url(#d)" stroke-width="3"/></svg>
      <svg viewBox="0 0 34 32"><path d="M8 1l18 4-2 11-8 4-8-6z" fill="#c4c4c4"/><path d="M10 8l4 1M19 10l4 1M12 14c3 2 6 2 9 0" stroke="#464646" stroke-width="2" fill="none"/><path d="M9 18l7 4 8-3h10l-9 13H0z" fill="#c4c4c4"/></svg>
      <svg viewBox="0 0 32 32"><rect width="32" height="32" rx="3" fill="#c4c4c4"/><path d="M7 7l18 18M25 7L7 25" stroke="#464646" stroke-width="6"/></svg>
    </div>
  </section>
</main>
</body>
</html>
```
FILE: styles.css
```css
* { box-sizing: border-box; }
html, body { margin: 0; padding: 0; }
body {
  width: 2108px; height: 2078px; overflow: hidden;
  display: flex; flex-direction: column;
  background: #464646; color: #d8d8d8;
  font: 21px/1.2 "Noto Sans", "Open Sans", sans-serif;
  letter-spacing: -0.15px;
}
svg { fill: #bebebe; }
.sprite { position: absolute; }

.titlebar { height: 58px; background: #fff; border-top: 2px solid #aaa; display: flex; align-items: center; flex: none; }
.appicon { width: 33px; height: 30px; margin-left: 12px; margin-right: 6px; flex: none; }
.wintitle { color: #979797; font-size: 22.5px; letter-spacing: .17px; white-space: nowrap; }
.winbtns { margin-left: auto; display: flex; gap: 70px; margin-right: 26px; flex: none; }
.wb { width: 22px; height: 22px; }

.menubar { height: 40px; background: #464646; display: flex; gap: 12px; padding: 6px 0 0 6px; align-items: center; flex: none; font-size: 23px; letter-spacing: -.2px; color: #e8e8e8; }

.main { flex: 1; display: grid; grid-template-columns: 358px 1327px 423px; min-height: 0; }

/* left dock */
.left { display: flex; flex-direction: column; border-right: 1px solid #5c5c5c; min-height: 0; }
.wilber { width: 357px; height: 50px; flex: none; margin-top: 2px; }
.tools { display: grid; grid-template-columns: repeat(6, 59px); grid-auto-rows: 56px; margin-left: -1px; flex: none; margin-top: -1px; }
.tools svg { width: 48px; height: 48px; margin: 4px 5px; overflow: visible; }
.tools svg:nth-child(27) { width: 59px; height: 56px; margin: 0; padding: 4px 5px; background: #1e1e1e; border-radius: 3px; }
.aglyph { font: bold 60px "Liberation Sans", sans-serif; fill: #bebebe; letter-spacing: 0; }
.colors { height: 49px; flex: none; position: relative; }
.swatches { position: absolute; left: 148px; top: 3px; width: 60px; height: 44px; }
.fg { position: absolute; left: 2px; top: 0; width: 37px; height: 27px; border: 2px solid #111; background: linear-gradient(135deg, #f0f 0 24%, #808080 24%); }
.bg { position: absolute; left: 18px; top: 14px; width: 37px; height: 27px; border: 2px solid #111; background: linear-gradient(135deg, #fff 0 76%, #f0f 76%); }
.swap { position: absolute; left: 42px; top: 0; width: 13px; height: 13px; }
.defblack { position: absolute; left: 1px; top: 29px; width: 7px; height: 7px; background: #000; border: 1px solid #ddd; }
.defwhite { position: absolute; left: 6px; top: 35px; width: 7px; height: 7px; background: #fff; border: 1px solid #333; }

.docktabs { height: 38px; flex: none; display: flex; position: relative; align-items: flex-end; }
.dtab { width: 38px; height: 36px; background: #222; border-right: 1px solid #3a3a3a; display: flex; align-items: center; justify-content: center; }
.dtab.on { background: #464646; border: 1px solid #5c5c5c; border-left: 0; border-bottom: 0; height: 38px; }
.dticon { width: 34px; height: 34px; }
.dimg { width: 33px; height: 33px; }
.cfg { position: absolute; right: 8px; top: 14px; width: 10px; height: 10px; }
.rtabs .cfg { right: -3px; top: 21px; }
.ltabs .cfg { right: -3px; top: 11px; }

.options { flex: 1; min-height: 0; padding: 0 2px; background: #444; border-top: 1px solid #5c5c5c; border-right: 1px solid #5c5c5c; margin-right: 3px; }
.opttitle { font-weight: 700; height: 33px; line-height: 33px; color: #d8d8d8; font-size: 22px; letter-spacing: 0; }
.modeRow { display: flex; gap: 4px; height: 41px; }
.combo { height: 41px; background: #2d2d2d; border: 1px solid #1c1c1c; border-radius: 4px; display: flex; align-items: center; padding: 0 12px 0 6px; }
.combo.grow { flex: 1; }
.combo.small { width: 55px; gap: 10px; padding: 0 6px 0 3px; }
.push { margin-left: auto; margin-right: 12px; }
.chev { width: 14px; height: 14px; flex: none; }
.rs { width: 16px; height: 16px; flex: none; }

.spin { position: relative; height: 58px; width: 302px; background: #2f2f2f; border: 1px solid #7e7e7e; display: flex; align-items: center; padding: 0 12px 0 1px; flex: none; }
.spin span, .spin b { position: relative; font-weight: 400; }
.spin b { margin-left: auto; margin-right: 1px; }
.fill { position: absolute; left: 0; top: 0; bottom: 0; background: #585858; border-right: 1px solid #111; }
.arrows { position: absolute; right: 0; top: 0; bottom: 0; width: 10px; background: #3c3c3c; }
.arrows svg { width: 10px; height: 56px; display: block; }
.spin.wide { width: 349px; margin-top: 4px; padding-right: 13px; }
.arrows.dark { width: 13px; background: #4e4e4e; border-left: 1px solid #111; }
.arrows.dark svg { width: 12px; }
.spin.off { border-color: #464646; }
.spin.off b { color: #5a5a5a; }
.spin.off .arrows { opacity: .5; }

.picker { display: flex; height: 62px; position: relative; }
.brushp { margin: 3px 0 1px; }
.dynp { margin-top: 3px; }
.pbtn { width: 36px; height: 62px; background: #2d2d2d; border: 1px solid #222; border-radius: 3px; display: flex; align-items: center; justify-content: center; flex: none; }
.preview { width: 26px; height: 26px; background: #fff; border: 1px solid #111; display: flex; align-items: center; justify-content: center; }
.blob { width: 22px; height: 22px; border-radius: 50%; background: radial-gradient(#000 0 20%, #444 35%, #fff 72%); }
.preview.dyn { background: #222; }
.preview.dyn svg { width: 24px; height: 24px; }
.pcol { margin-left: 2px; width: 278px; }
.plabel { height: 28px; line-height: 28px; }
.pentry { height: 34px; background: #1e1e1e; line-height: 32px; padding-left: 4px; color: #e0e0e0; border: 1px solid #2a2a2a; }
.pedit { width: 22px; height: 22px; margin: 36px 0 0 6px; }

.srow { display: flex; align-items: center; margin-top: 4px; height: 58px; }
.srow .rs { margin-left: 4px; }
.lockb { width: 23px; height: 58px; margin-left: 5px; background: #222; border-radius: 4px; display: flex; align-items: center; justify-content: center; }
.lockb svg { width: 11px; height: 18px; }

.check { display: flex; align-items: center; gap: 5px; height: 34.3px; letter-spacing: -.25px; }
.check.first { margin-top: 3px; }
.check.dim { color: #b8b8b8; }
.box { width: 13px; height: 13px; background: #2a2a2a; border-radius: 3px; margin-left: 2px; flex: none; border: 1px solid #333; }
.box.on { background: radial-gradient(#fff 0 3.800px, #111 4.500px); border-color: #111; }

.actions { height: 48px; flex: none; display: grid; grid-template-columns: repeat(4, 88px); align-items: center; justify-items: center; border-right: 1px solid #5c5c5c; margin-right: 3px; }
.actions svg { width: 30px; height: 32px; }

/* centre */
.center { display: flex; flex-direction: column; min-height: 0; }
.imgtabs { height: 42px; flex: none; border-bottom: 1px solid #5c5c5c; display: flex; padding-top: 3px; }
.imgtab { width: 82px; height: 39px; border: 1px solid #555; border-bottom: 0; background: #474747; display: flex; align-items: center; padding-left: 3px; gap: 6px; }
.imgthumb { width: 48px; height: 27px; }
.imgclose { width: 12px; height: 12px; }
.viewport { flex: 1; display: grid; grid-template-columns: 26px 1280px 1fr; grid-template-rows: 25px 1850px 15px; min-height: 0; }
.navbtn { display: flex; align-items: center; padding: 0 0 3px 7px; }
.navbtn svg { width: 11px; height: 11px; }
.hruler { width: 1280px; height: 25px; display: block; }
.rtext text { font: 16px "Noto Sans", sans-serif; fill: #c8ccd0; letter-spacing: 0; }
.rtext.mid text { text-anchor: middle; }
.rtext rect { fill: #c8ccd0; }
.vscrolltop { padding: 3px 0 0 3px; }
.vscrolltop svg { width: 12px; height: 12px; display: block; }
.vruler { width: 26px; height: 1850px; display: block; }
.canvas { position: relative; width: 1280px; height: 1850px; overflow: visible; }
.image { position: absolute; left: -1px; top: 564px; width: 1281px; height: 720px; }
.flag { font: 32px "Liberation Serif", serif; fill: #aa00aa; letter-spacing: 0; }
.vscroll { width: 14px; margin-left: 1px; background: #5e5e5e; border: 1px solid #2a2a2a; border-radius: 3px; margin-top: -7px; margin-bottom: 0; }
.hbar { grid-column: 1 / 3; display: flex; align-items: center; }
.navsq { width: 11px; height: 11px; margin-left: 3px; background: #6a6a6a; border: 1px solid #888; flex: none; }
.hthumb { height: 15px; width: 1289px; margin-left: 6px; background: #5e5e5e; border: 1px solid #2a2a2a; border-radius: 3px; flex: none; }
.corner { padding-left: 5px; }
.corner svg { width: 14px; height: 14px; display: block; }
.status { height: 48px; flex: none; display: flex; align-items: center; padding-left: 161px; }
.scombo { height: 42px; background: #2d2d2d; border: 1px solid #222; border-radius: 3px; display: flex; align-items: center; }
.scombo.px { width: 80px; padding: 4px 12px 0 6px; justify-content: space-between; }
.scombo.zm { width: 33px; justify-content: center; }
.zoomwrap { width: 61px; height: 42px; background: #3c3c3c; display: flex; align-items: center; justify-content: center; }
.zoomval { background: #1e1e1e; height: 34px; line-height: 36px; width: 56px; text-align: center; font-size: 19px; letter-spacing: -.7px; white-space: nowrap; }
.stext { margin-left: 3px; padding-top: 3px; font-size: 22.9px; }

/* right dock */
.right { display: flex; flex-direction: column; min-height: 0; padding-left: 2px; border-left: 1px solid #5c5c5c; overflow: hidden; }
.rtabs { height: 42px; flex: none; display: flex; align-items: flex-end; position: relative; padding-left: 1px; border-bottom: 1px solid #5c5c5c; }
.rt { width: 40px; height: 36px; background: #222; display: flex; align-items: center; justify-content: center; flex: none; margin-bottom: 0; }
.rt.rtw { width: 36px; }
.rt.act { width: 39px; height: 40px; background: #464646; border: 1px solid #5c5c5c; border-bottom: 0; }
.rti { width: 33px; height: 33px; }
.wood { width: 32px; height: 33px; background: repeating-linear-gradient(90deg, #ffc15c 0 6px, #f5ac45 6px 8px, #ffc766 8px 13px); }
.aa { width: 33px; height: 33px; background: #fff; color: #000; font: 24px/33px "Liberation Serif", serif; text-align: center; letter-spacing: 0; }
.blackrect { width: 29px; height: 18px; background: #000; border: 2px solid #fff; }
.egaEntry { height: 32px; flex: none; background: #1e1e1e; margin-top: 6px; line-height: 30px; padding-left: 4px; }
.palview { height: 332px; flex: none; margin-top: 3px; border-top: 1px solid #111; border-left: 1px solid #111; padding: 81px 0 0 13px; background: #474747; border-bottom: 1px solid #666; }
.palette { display: flex; width: 402px; height: 166px; }
.palette i { flex: none; width: 25px; border-right: 1px solid #000; background-image: repeating-linear-gradient(transparent 0 10px, #000 10px 11px); border-top: 1px solid #000; }
.palette i.k0 { width: 26px; background-color: #000; }
.k1 { background-color: #aa00aa; } .k2 { background-color: #ff5555; } .k3 { background-color: #ff55aa; } .k4 { background-color: #ff55ff; }
.k5 { background-color: #ffaaff; } .k6 { background-color: #ffff00; } .k7 { background-color: #ffffaa; } .k8 { background-color: #ffffff; }
.k9 { background-color: #aaffff; } .k10 { background-color: #00ffff; } .k11 { background-color: #55aaff; } .k12 { background-color: #0000ff; }
.k13 { background-color: #0055aa; } .k14 { background-color: #000055; } .k15 { background-color: #555555; }
.palname { height: 32px; flex: none; margin: 5px 0 0 3px; display: flex; align-items: center; }
.ent { background: #1e1e1e; height: 32px; line-height: 30px; padding-left: 2px; display: block; flex: none; }
.undefined { width: 356px; }
.gridic { width: 13px; height: 13px; margin: 0 4px; flex: none; }
.cols { width: 60px; padding-left: 3px; }
.palbtns { height: 40px; margin: 5px 0 0 -3px; flex: none; position: relative; display: grid; grid-template-columns: 72px 72px 72px 71px 71px 71px; align-items: center; justify-items: center; }
.palbtns svg { width: 32px; height: 32px; }
.grip { height: 9px; flex: none; border-bottom: 1px solid #5c5c5c; background: radial-gradient(circle, #aaa 1px, transparent 1.500px) 212px 0 / 5px 4px no-repeat; }
.ltabs { height: 35px; flex: none; display: flex; align-items: stretch; position: relative; margin-top: 1px; border-bottom: 1px solid #5c5c5c; }
.lt { display: flex; align-items: center; background: #222; height: 34px; }
.lt.on { background: #464646; width: 105px; }
.lt svg { width: 32px; height: 32px; flex: none; margin-right: 2px; }
.lt.chan { width: 127px; }
.lt.pth { width: 92px; border-left: 1px solid #3a3a3a; }
.chbox { width: 33px; height: 32px; border: 2px solid #aaa; display: flex; gap: 3px; padding: 3px 5px; margin-right: 1px; flex: none; }
.chbox i { flex: 1; background: #666; }
.rmode { margin-top: 2px; padding-left: 2px; width: 420px; }
.rmode .combo.small { width: 46px; flex: none; gap: 8px; padding: 0 2px; margin-left: -1px; }
.spin.lop { width: 415px; margin-top: 1px; margin-left: 1px; padding-right: 1px; }
.lockrow { height: 32px; flex: none; display: flex; align-items: center; gap: 9px; padding: 0 0 3px 1px; color: #c8c8c8; }
.lockrow span { margin-right: -1px; }
.lockrow svg { width: 14px; height: 14px; }

.layers { list-style: none; margin: 0 0 0 2px; padding: 0; height: 1257px; background: #2f2f2f; flex: none; }
.layers li { height: 35.02px; display: flex; align-items: center; color: #c8c8c8; padding-left: 3px; font-size: 21px; letter-spacing: .1px; }
.layers li.sel { background: #1e1e1e; color: #e4e4e4; }
.layers li.base { font-weight: 700; font-size: 22.5px; letter-spacing: .3px; }
.eye { width: 22px; height: 16px; flex: none; margin-left: 0; margin-top: -2px; }
.thumb { width: 36px; height: 24px; flex: none; margin-left: 49px; margin-right: 5px; border: 2px solid #111; background: repeating-conic-gradient(#9a9a9a 0 25%, #666 0 50%) 0 0 / 14px 14px; display: block; margin-top: -2px; }
.sel .thumb { border-color: #fff; }
.thumb svg { width: 32px; height: 20px; display: block; }
.k { fill: #000; }
.r { fill: #f4475c; }
.p { fill: #f0508c; }
.layerbtns { height: 48px; flex: none; display: grid; grid-template-columns: repeat(7, 53px) 57px; align-items: center; justify-items: center; margin-left: -2px; }
.layerbtns svg { width: 32px; height: 32px; }
```
